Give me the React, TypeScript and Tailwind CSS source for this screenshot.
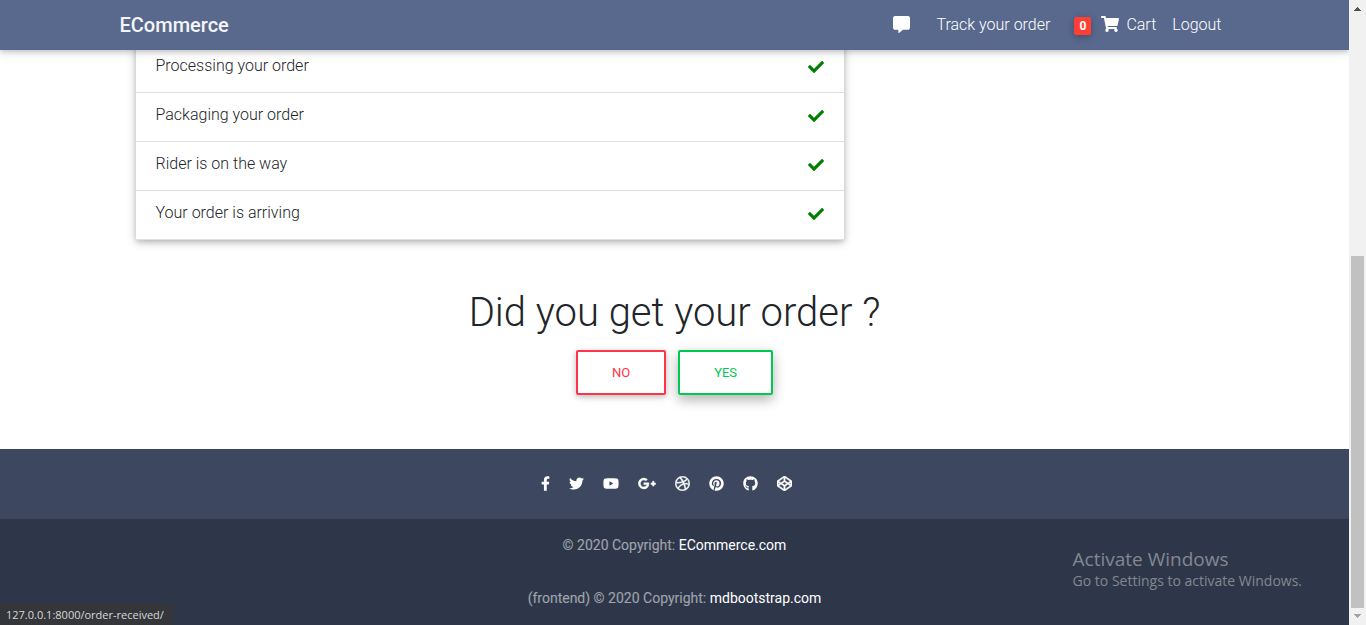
import {
  FaCheck,
  FaCodepen,
  FaCommentAlt,
  FaDribbble,
  FaFacebookF,
  FaGithub,
  FaGooglePlusG,
  FaPinterest,
  FaShoppingCart,
  FaTwitter,
  FaYoutube,
} from "react-icons/fa";

const steps = [
  "Processing your order",
  "Packaging your order",
  "Rider is on the way",
  "Your order is arriving",
];

const socials = [
  { name: "Facebook", Icon: FaFacebookF, size: "w-[9px]" },
  { name: "Twitter", Icon: FaTwitter, size: "w-[15px]" },
  { name: "YouTube", Icon: FaYoutube, size: "w-4" },
  { name: "Google Plus", Icon: FaGooglePlusG, size: "w-[18px] stroke-current stroke-[16px]" },
  { name: "Dribbble", Icon: FaDribbble, size: "w-[15px] stroke-current stroke-[16px]" },
  { name: "Pinterest", Icon: FaPinterest, size: "w-[15px]" },
  { name: "GitHub", Icon: FaGithub, size: "w-[15px]" },
  { name: "CodePen", Icon: FaCodepen, size: "w-[15px] stroke-current stroke-[16px]" },
];

function Navbar() {
  return (
    <header className="relative z-10 shrink-0 bg-[#59698d] shadow-[0_2px_5px_0_rgba(0,0,0,0.16),0_2px_10px_0_rgba(0,0,0,0.12)]">
      <nav className="mx-auto flex h-[50px] max-w-[1140px] items-center justify-between px-[15px] text-white">
        <a href="#home" className="text-[20px] leading-[30px] font-medium text-[#f4f5f8]">
          ECommerce
        </a>
        <div className="flex items-center pr-2 font-light leading-6">
          <a href="#messages" aria-label="Messages" className="mr-[26px] pb-[2px]">
            <FaCommentAlt className="size-[17px]" />
          </a>
          <a href="#track">Track your order</a>
          <a href="#cart" className="ml-6 flex items-center">
            <span className="mt-[2px] flex h-[18px] w-[17px] items-center justify-center rounded-[2px] bg-[#ff3e35] text-[12px] font-bold shadow-[0_2px_5px_0_rgba(0,0,0,0.16),0_2px_10px_0_rgba(0,0,0,0.12)]">
              0
            </span>
            <FaShoppingCart className="mb-[2px] ml-[10px] h-4 w-[18px]" />
            <span className="ml-[7px]">Cart</span>
          </a>
          <a href="#logout" className="ml-4">
            Logout
          </a>
        </div>
      </nav>
    </header>
  );
}

function OrderSteps() {
  return (
    <ul className="-mt-[6px] ml-4 w-[708px] bg-white shadow-[0_2px_5px_0_rgba(0,0,0,0.16),0_2px_10px_0_rgba(0,0,0,0.2)]">
      {steps.map((step) => (
        <li
          key={step}
          className="flex items-start justify-between border-b border-[#dfdfdf] px-5 pt-[10px] pb-[14px] leading-6 text-[#212529]"
        >
          <span>{step}</span>
          <FaCheck className="mt-[5px] size-4 text-[#008000]" />
        </li>
      ))}
    </ul>
  );
}

function Confirmation() {
  return (
    <section className="mt-[49px] flex flex-col items-center">
      <h1 className="text-[40px] leading-[48px] text-[#212529]">Did you get your order ?</h1>
      <div className="mt-[13px] flex gap-3">
        <button
          type="button"
          className="h-[45px] rounded-[2px] border-2 border-[#ff3547] px-[34px] text-[13px] leading-5 font-normal text-[#ff3547] uppercase shadow-[0_2px_5px_0_rgba(0,0,0,0.16),0_2px_10px_0_rgba(0,0,0,0.12)]"
        >
          No
        </button>
        <button
          type="button"
          className="h-[45px] rounded-[2px] border-2 border-[#00c851] px-[34px] text-[13px] leading-5 font-normal text-[#00c851] uppercase shadow-[0_5px_11px_0_rgba(0,0,0,0.18),0_4px_15px_0_rgba(0,0,0,0.15)]"
        >
          Yes
        </button>
      </div>
    </section>
  );
}

function Footer() {
  return (
    <footer className="mt-[54px] flex shrink-0 grow flex-col bg-[#3d4760]">
      <div className="flex h-[70px] items-center justify-center pr-4 pb-px text-white">
        <div className="flex items-center gap-[19px]">
          {socials.map(({ name, Icon, size }) => (
            <a key={name} href="#social" aria-label={name}>
              <Icon className={`h-[15px] ${size}`} />
            </a>
          ))}
        </div>
      </div>
      <div className="flex grow flex-col items-center gap-[31px] bg-[#2e374a] py-[15px] text-[14px] leading-[22px] font-normal text-white/55">
        <p>
          © 2020 Copyright:{" "}
          <a href="#ecommerce" className="text-white">
            ECommerce.com
          </a>
        </p>
        <p>
          (frontend) © 2020 Copyright:{" "}
          <a href="#mdbootstrap" className="text-white">
            mdbootstrap.com
          </a>
        </p>
      </div>
    </footer>
  );
}

function Scrollbar() {
  return (
    <div aria-hidden="true" className="flex w-[17px] shrink-0 flex-col items-center bg-[#f1f1f1]">
      <svg className="h-[17px] w-[17px] shrink-0" viewBox="0 0 17 17" fill="#505050">
        <path d="M8 7h1v1h1v1h1v1h1v1H5v-1h1V9h1V8h1z" />
      </svg>
      <div className="grow-[239]" />
      <div className="w-[13px] grow-[352] bg-[#c1c1c1]" />
      <svg className="h-[17px] w-[17px] shrink-0" viewBox="0 0 17 17" fill="#a3a3a3">
        <path d="M5 6h7v1h-1v1h-1v1H9v1H8V9H7V8H6V7H5z" />
      </svg>
    </div>
  );
}

export default function App() {
  return (
    <div className="relative flex h-screen overflow-hidden bg-white font-['Roboto',sans-serif] text-[16px] font-light">
      <div className="flex min-w-0 flex-1 flex-col overflow-hidden">
        <Navbar />
        <main className="mx-auto w-full max-w-[1140px] shrink-0 px-[15px]">
          <OrderSteps />
          <Confirmation />
        </main>
        <Footer />
      </div>
      <Scrollbar />
      <div className="pointer-events-none absolute right-[64px] bottom-[34px] font-['Open_Sans',sans-serif] font-normal text-[#83878f]">
        <p className="text-[19px] leading-6">Activate Windows</p>
        <p className="text-[14px] leading-5">Go to Settings to activate Windows.</p>
      </div>
      <div className="absolute bottom-0 left-0 rounded-tr-[3px] bg-[#35363a] pr-[10px] pl-[6px] font-['Open_Sans',sans-serif] text-[11px] leading-[21px] font-normal text-[#d5d7da]">
        127.0.0.1:8000/order-received/
      </div>
    </div>
  );
}
